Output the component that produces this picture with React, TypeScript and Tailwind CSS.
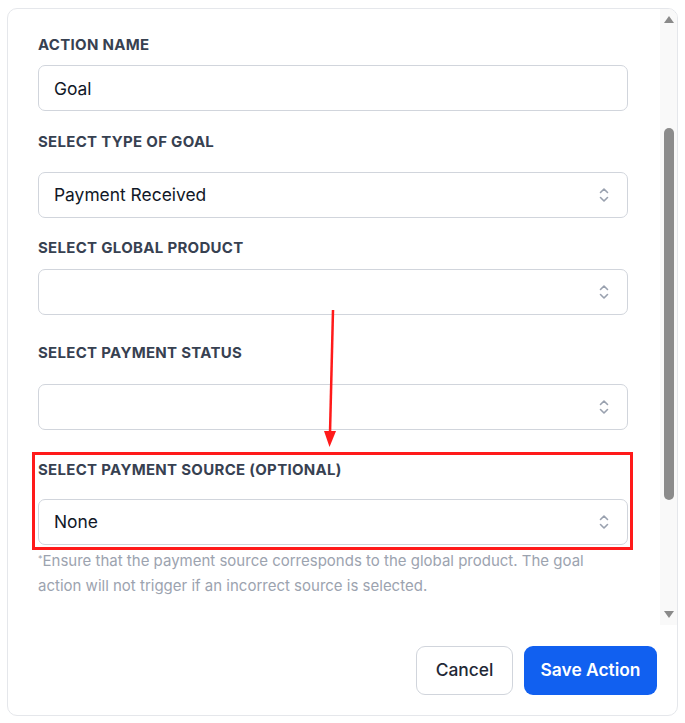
import React from 'react';

const UpDown = () => (
  <svg width="12" height="18" viewBox="0 0 12 18" fill="none" className="text-gray-400">
    <path d="M2.5 6.5 6 3l3.5 3.5" stroke="currentColor" strokeWidth="1.6" strokeLinecap="round" strokeLinejoin="round" />
    <path d="M2.5 11.5 6 15l3.5-3.5" stroke="currentColor" strokeWidth="1.6" strokeLinecap="round" strokeLinejoin="round" />
  </svg>
);

const Label: React.FC<{ children: React.ReactNode; className?: string }> = ({ children, className }) => (
  <div className={'h-5 leading-5 text-[15px] font-bold uppercase tracking-[0.02em] text-[#374151] ' + (className ?? '')}>
    {children}
  </div>
);

const SelectBox: React.FC<{ value?: string; className?: string }> = ({ value, className }) => (
  <div
    className={
      'flex h-[46px] w-[590px] items-center justify-between rounded-[7px] border border-gray-300 bg-white pl-[15px] pr-[17px] ' +
      (className ?? '')
    }
  >
    <span className="text-[17.4px] text-[#111827]">{value}</span>
    <UpDown />
  </div>
);

const Scrollbar = () => (
  <div className="flex w-[17px] flex-col items-center bg-[#f9f9f9] pt-[7px] pb-[7px]">
    <svg width="10" height="7" viewBox="0 0 10 7">
      <polygon points="5,0 10,7 0,7" fill="#8a8a8a" />
    </svg>
    <div className="mt-[105px] h-[372px] w-[10px] rounded-full bg-[#8c8c8c]" />
    <div className="flex-1" />
    <svg width="10" height="7" viewBox="0 0 10 7">
      <polygon points="0,0 10,0 5,7" fill="#8a8a8a" />
    </svg>
  </div>
);

export default function App() {
  return (
    <div className="relative h-[723px] w-[685px] bg-white" style={{ fontFamily: 'Inter, "Noto Sans", sans-serif' }}>
      <div className="ml-[7px] pt-[8px]">
        <div className="flex h-[708px] w-[671px] flex-col overflow-hidden rounded-[10px] border border-gray-200 bg-white">
          <div className="flex h-[616px]">
            <div className="flex-1 pl-[30px] pt-[26px]">
              <Label>Action Name</Label>
              <input
                readOnly
                value="Goal"
                className="mt-[10px] h-[46px] w-[590px] rounded-[7px] border border-gray-300 bg-white px-[15px] pt-[1px] text-[17.4px] text-[#111827] outline-none"
              />
              <Label className="mt-[21px]">Select Type of Goal</Label>
              <SelectBox value="Payment Received" className="mt-[20px]" />
              <Label className="mt-[20px]">Select Global Product</Label>
              <SelectBox className="mt-[11px]" />
              <Label className="mt-[28px]">Select Payment Status</Label>
              <SelectBox className="mt-[21px]" />
              <Label className="mt-[30px]">Select Payment Source (Optional)</Label>
              <SelectBox value="None" className="mt-[19px]" />
              <p className="mt-[3px] text-[15px] leading-[25px] text-[#9ca3af]">
                <sup className="text-[9px]">*</sup>Ensure that the payment source corresponds to the global product. The goal
                <br />
                action will not trigger if an incorrect source is selected.
              </p>
            </div>
            <Scrollbar />
          </div>
          <div className="flex justify-end gap-[11px] pr-[20px] pt-[21px]">
            <button className="h-[49px] w-[97px] rounded-[9px] border border-gray-300 bg-white text-[17.4px] font-medium text-[#1f2937]">
              Cancel
            </button>
            <button className="h-[49px] w-[133px] rounded-[9px] bg-[#1160f0] text-[17.4px] font-semibold text-white">
              Save Action
            </button>
          </div>
        </div>
      </div>

      {/* annotation overlay */}
      <div className="pointer-events-none absolute left-[32px] top-[452px] h-[98px] w-[601px] border-[3px] border-[#ff1a1a]" />
      <svg className="pointer-events-none absolute left-0 top-0" width="685" height="723" viewBox="0 0 685 723">
        <line x1="333" y1="310" x2="330" y2="433" stroke="#ff1a1a" strokeWidth="2.5" />
        <polygon points="324,431 336,431 329.5,447" fill="#ff1a1a" />
      </svg>
    </div>
  );
}
